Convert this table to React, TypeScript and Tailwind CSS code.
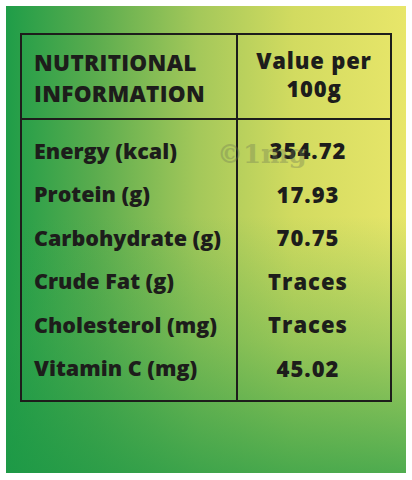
const rows = [
  { label: 'Energy (kcal)', value: '354.72' },
  { label: 'Protein (g)', value: '17.93' },
  { label: 'Carbohydrate (g)', value: '70.75' },
  { label: 'Crude Fat (g)', value: 'Traces' },
  { label: 'Cholesterol (mg)', value: 'Traces' },
  { label: 'Vitamin C (mg)', value: '45.02' },
];

export default function App() {
  return (
    <div className="w-[412px] h-[480px] bg-white pt-[6px] pl-[6px] font-['Open_Sans',sans-serif] text-[#1d1d1b]">
      <div className="relative w-[400px] h-[467px] pt-[27px] pl-[14px] bg-[linear-gradient(to_top,rgba(28,152,70,0.75)_0%,rgba(40,158,72,0.35)_28%,rgba(40,158,72,0)_55%),linear-gradient(to_right,#1f9d48_0%,#5aac4e_22%,#a4c85a_48%,#d2db60_72%,#e8e66a_100%)]">
        <div className="w-[372px] border-2 border-[#1d1d1b]">
          <div className="grid grid-cols-[216px_1fr] h-[85px] border-b-2 border-[#1d1d1b]">
            <div className="border-r-2 border-[#1d1d1b] pl-[12px] flex flex-col justify-center pt-[2px]">
              <p className="text-[22.5px] leading-[31px] font-extrabold uppercase tracking-[0.3px]">Nutritional</p>
              <p className="text-[22.5px] leading-[31px] font-extrabold uppercase tracking-[0.3px]">Information</p>
            </div>
            <div className="flex flex-col items-center justify-center pb-[6px]">
              <p className="text-[22px] leading-[28px] font-extrabold tracking-[0.8px]">Value per</p>
              <p className="text-[22px] leading-[28px] font-extrabold tracking-[0.8px]">100g</p>
            </div>
          </div>
          <div className="grid grid-cols-[216px_1fr] pt-[9px] pb-[10px]">
            <div className="border-r-2 border-[#1d1d1b] -mt-[9px] -mb-[10px] pt-[9px] pb-[10px] pl-[12px]">
              {rows.map(r => (
                <div key={r.label} className="h-[43.5px] flex items-center text-[21.5px] font-extrabold">
                  {r.label}
                </div>
              ))}
            </div>
            <div className="pr-[12px]">
              {rows.map(r => (
                <div key={r.label} className="h-[43.5px] flex items-center justify-center text-[22px] font-extrabold tracking-[1px]">
                  {r.value}
                </div>
              ))}
            </div>
          </div>
        </div>
        <span className="absolute left-[211px] top-[129px] font-['DejaVu_Serif',serif] font-bold text-[26px] text-[#6f7a55] opacity-35 pointer-events-none">
          ©1mg
        </span>
      </div>
    </div>
  );
}
